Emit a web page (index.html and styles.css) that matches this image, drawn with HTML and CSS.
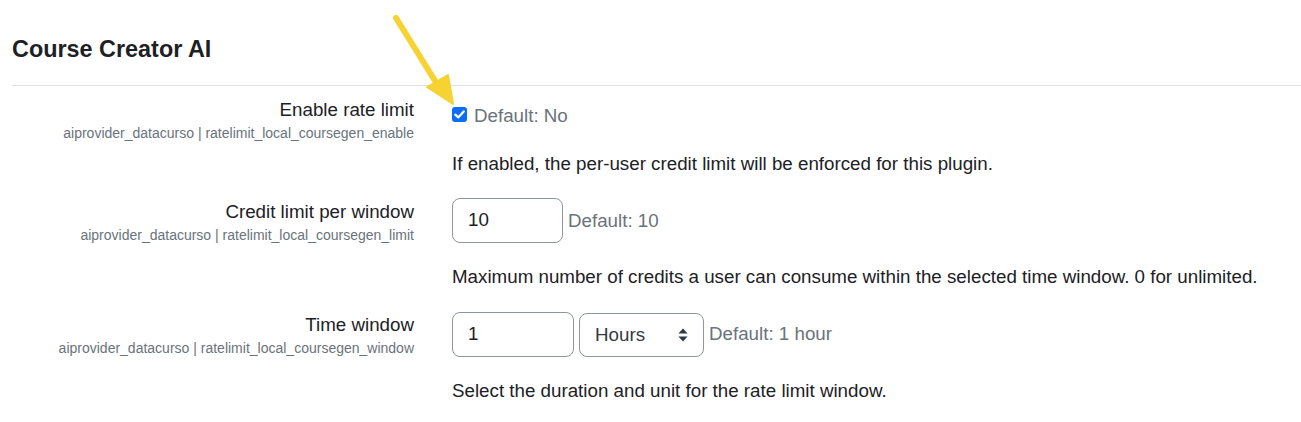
FILE: index.html
```html
<!DOCTYPE html>
<html lang="en">
<head>
<meta charset="utf-8">
<title>Course Creator AI</title>
<link rel="stylesheet" href="styles.css">
</head>
<body>
<div class="page">
  <h3 class="section-title">Course Creator AI</h3>
  <div class="settings">
    <div class="row">
      <div class="label-col">
        <div class="label">Enable rate limit</div>
        <div class="shortname">aiprovider_datacurso | ratelimit_local_coursegen_enable</div>
      </div>
      <div class="control-col">
        <div class="control-line check-line">
          <span class="checkbox"><svg width="11" height="9" viewBox="0 0 11 9"><path d="M1.3 4.6 L4.2 7.4 L9.7 1.4" fill="none" stroke="#fff" stroke-width="2.2" stroke-linecap="round" stroke-linejoin="round"/></svg></span>
          <span class="default">Default: No</span>
        </div>
        <div class="desc">If enabled, the per-user credit limit will be enforced for this plugin.</div>
      </div>
    </div>
    <div class="row">
      <div class="label-col">
        <div class="label">Credit limit per window</div>
        <div class="shortname">aiprovider_datacurso | ratelimit_local_coursegen_limit</div>
      </div>
      <div class="control-col">
        <div class="control-line">
          <div class="input input-sm">10</div>
          <span class="default">Default: 10</span>
        </div>
        <div class="desc">Maximum number of credits a user can consume within the selected time window. 0 for unlimited.</div>
      </div>
    </div>
    <div class="row">
      <div class="label-col">
        <div class="label">Time window</div>
        <div class="shortname">aiprovider_datacurso | ratelimit_local_coursegen_window</div>
      </div>
      <div class="control-col">
        <div class="control-line">
          <div class="input input-md">1</div>
          <div class="select"><span>Hours</span><svg width="10" height="14" viewBox="0 0 10 14"><path d="M5 0.5 L9.6 5.6 L0.4 5.6 Z M5 13.5 L9.6 8.4 L0.4 8.4 Z" fill="#343a40"/></svg></div>
          <span class="default">Default: 1 hour</span>
        </div>
        <div class="desc">Select the duration and unit for the rate limit window.</div>
      </div>
    </div>
  </div>
</div>
<svg class="annotation" width="1301" height="422" viewBox="0 0 1301 422">
  <line x1="396" y1="18" x2="437" y2="84" stroke="#f6d232" stroke-width="6" stroke-linecap="round"/>
  <polygon points="453,104 427,87 448,75" fill="#f6d232" stroke="#f6d232" stroke-width="2" stroke-linejoin="round"/>
</svg>
</body>
</html>
```

FILE: styles.css
```css
html, body {
  margin: 0;
  padding: 0;
  background: #ffffff;
}

body {
  font-family: "Liberation Sans", Arial, sans-serif;
  color: #1d2125;
  position: relative;
  width: 1301px;
  height: 422px;
  overflow: hidden;
}

.page {
  padding-left: 12px;
}

.section-title {
  margin: 0;
  padding-top: 35px;
  font-size: 23.4px;
  line-height: 28px;
  font-weight: 700;
  height: 50px;
  border-bottom: 1px solid #dee2e6;
}

.settings {
  display: flex;
  flex-direction: column;
  gap: 20px;
  padding-top: 10px;
}

.row {
  display: grid;
  grid-template-columns: 402px 1fr;
  column-gap: 38px;
}

.label-col {
  text-align: right;
}

.label {
  font-size: 18.75px;
  line-height: 28px;
}

.shortname {
  font-size: 14px;
  line-height: 18px;
  color: #6a737b;
}

.control-col {
  display: flex;
  flex-direction: column;
}

.control-line {
  display: flex;
  align-items: center;
}

.check-line {
  padding-top: 6px;
  height: 28px;
}

.checkbox {
  width: 15px;
  height: 15px;
  border-radius: 3px;
  background: #0b6cf6;
  display: flex;
  align-items: center;
  justify-content: center;
  margin-right: 7px;
  margin-top: -3px;
}

.default {
  font-size: 18.75px;
  color: #6a737b;
  line-height: 28px;
}

.desc {
  font-size: 18.75px;
  line-height: 28px;
  margin-top: 20px;
}

.input,
.select {
  box-sizing: border-box;
  height: 45px;
  border: 1px solid #8f959e;
  border-radius: 8px;
  font-size: 18.75px;
  line-height: 28px;
  color: #1d2125;
  padding: 7px 15px;
  margin-right: 5px;
}

.input-sm { width: 111px; }
.input-md { width: 122px; }

.select {
  width: 125px;
  height: 44px;
  margin-top: 2px;
  display: flex;
  align-items: center;
  justify-content: space-between;
  padding-right: 15px;
  color: #343a40;
}

.annotation {
  position: absolute;
  left: 0;
  top: 0;
  pointer-events: none;
}
```
